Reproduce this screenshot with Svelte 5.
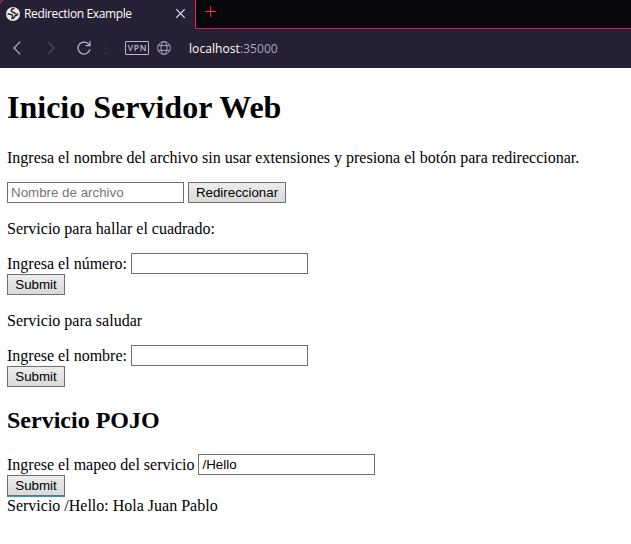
<script>
  let service = $state('/Hello');
</script>

<div class="window">
  <header class="tabs">
    <div class="tab">
      <svg class="corner" width="4" height="4" viewBox="0 0 4 4"><path d="M0 3.5C0 1.5 1 .5 3.5 0" /></svg>
      <svg class="favicon" width="14" height="14" viewBox="0 0 14 14">
        <circle cx="7" cy="7" r="7" fill="#e9e8ec" />
        <path d="M8.4 1.6C6 1.7 4.9 3 5.4 4.3C5.9 5.5 8 4.9 8.7 6.2C9.2 7.3 11 7.2 12.3 7M1.6 6.8C3.4 7.6 5.9 6.9 6.5 8.4C6.9 9.6 6 10.6 5.8 12.2" stroke="#252033" stroke-width="1.5" />
        <path d="M12.3 7C12.2 8.8 10.7 9.2 9.3 9.4C8.8 10.8 8.4 12 6 12.3L6.5 10.7C7.8 10.3 7.7 8.5 9.2 8Z" fill="#252033" />
      </svg>
      <span class="title">Redirection Example</span>
      <svg class="close" width="9" height="9" viewBox="0 0 9 9"><path d="M.3.3L8.7 8.7M8.7.3L.3 8.7" /></svg>
    </div>
    <div class="strip">
      <svg width="11" height="11" viewBox="0 0 11 11"><path d="M0 5.5H11M5.5 0V11" /></svg>
    </div>
  </header>

  <nav>
    <svg class="back" width="8" height="14" viewBox="0 0 8 14"><path d="M7.3.7L1 7L7.3 13.3" /></svg>
    <svg class="forward" width="8" height="14" viewBox="0 0 8 14"><path d="M.7.7L7 7L.7 13.3" /></svg>
    <svg class="reload" width="14" height="14" viewBox="0 0 14 14">
      <path d="M12.2 4A6 6 0 1 0 12.9 8.3" /><path d="M13 .3V4.7H8.6" />
    </svg>
    <svg class="dots" width="2" height="11" viewBox="0 0 2 11"><path d="M0 0H2V2H0ZM0 4.5H2V6.5H0ZM0 9H2V11H0Z" /></svg>
    <span class="vpn">VPN</span>
    <svg class="globe" width="14" height="14" viewBox="0 0 14 14">
      <circle cx="7" cy="7" r="6.4" /><ellipse cx="7" cy="7" rx="3" ry="6.4" /><path d="M1.3 4.6H12.7M1.3 9.4H12.7" />
    </svg>
    <span class="url"><b>localhost</b>:35000</span>
  </nav>

  <main>
    <h1>Inicio Servidor Web</h1>
    <p>Ingresa el nombre del archivo sin usar extensiones y presiona el botón para redireccionar.</p>
    <form class="row">
      <input placeholder="Nombre de archivo" aria-label="Nombre de archivo" />
      <button class="redirect" type="button">Redireccionar</button>
    </form>
    <p>Servicio para hallar el cuadrado:</p>
    <form>
      <div class="row"><label for="num">Ingresa el número:</label><input id="num" /></div>
      <button type="button">Submit</button>
    </form>
    <p>Servicio para saludar</p>
    <form>
      <div class="row"><label for="name">Ingrese el nombre:</label><input id="name" /></div>
      <button type="button">Submit</button>
    </form>
    <h2>Servicio POJO</h2>
    <form>
      <div class="row"><label for="map">Ingrese el mapeo del servicio</label><input id="map" bind:value={service} /></div>
      <button class="active" type="button">Submit</button>
    </form>
    <div class="result">Servicio /Hello: Hola Juan Pablo</div>
  </main>
</div>

<style>
  :global(body) { margin: 0; background: #fff; }
  svg { display: block; flex: none; fill: none; }
  .window { height: 544px; overflow: hidden; background: #fff; }
  .tabs { display: flex; height: 29px; background: #252033; }
  .tab { position: relative; box-sizing: border-box; width: 195px; display: flex; align-items: center; padding: 0 10px 2px 6px; }
  .corner { position: absolute; left: 0; top: 0; stroke: #fa1e4e; }
  .title { margin-left: 4px; font: 12px/16px "Open Sans", sans-serif; letter-spacing: -.37px; color: #fff; white-space: nowrap; }
  .close { margin-left: auto; stroke: #e9e8ec; stroke-width: 1.2; }
  .strip { flex: 1; box-sizing: border-box; border-left: 1px solid #fa1e4e; border-bottom: 1px solid; border-bottom-color: #d61b43; padding: 6px 0 0 9px; background: #08070c; }
  .strip svg { stroke: #fa1e4e; }
  nav { display: flex; align-items: center; box-sizing: border-box; height: 39px; padding: 0 0 1px 13px; background: #252033; }
  .back { stroke: #bbb5d0; stroke-width: 1.2; }
  .forward { margin-left: 26px; stroke: #514b60; stroke-width: 1.2; }
  .reload { margin-left: 22px; stroke: #bbb5d0; stroke-width: 1.3; }
  .dots { margin-left: 14px; fill: #342e43; }
  .vpn { box-sizing: border-box; width: 24px; height: 14px; margin-left: 18px; border: 1px solid #bbb5d0; border-radius: 1px; font: 600 8.5px/12px "Open Sans", sans-serif; letter-spacing: .7px; text-align: center; text-indent: 1px; color: #bbb5d0; }
  .globe { margin-left: 8px; stroke: #aca6c0; }
  .url { margin-left: 18px; padding-top: 1px; font: 12px/16px "Open Sans", sans-serif; letter-spacing: .07px; color: #aaa4bd; white-space: nowrap; }
  .url b { font-weight: 400; color: #fff; }
  main { padding: 21px 0 0 7px; font: 16px/20px "Liberation Serif", serif; color: #000; }
  h1 { margin: 0 0 22px; font-size: 32px; line-height: 37px; white-space: nowrap; }
  p { margin: 0; height: 18px; white-space: nowrap; }
  form { margin: 16px 0; }
  .row { display: flex; gap: 4px; height: 21px; }
  label { line-height: 22px; white-space: nowrap; }
  input { box-sizing: border-box; width: 177px; height: 21px; margin: 0; padding: 1px 3px; border: 1px solid #6f6f6f; background: #fff; font: 13.333px "Liberation Sans", sans-serif; color: #000; outline: none; }
  input::placeholder { color: #757575; }
  button { display: block; box-sizing: border-box; width: 58px; height: 21px; margin: 0; padding: 0; border: 1px solid #707070; border-radius: 0; background: linear-gradient(#ededed, #d9d9d9); font: 13.333px/19px "Liberation Sans", sans-serif; color: #000; text-align: center; }
  .redirect { width: 98px; }
  .active { box-shadow: 0 1px #259adb; }
  h2 { margin: 20px 0; font-size: 24px; line-height: 27px; }
  h2 + form { margin-bottom: 0; }
</style>
